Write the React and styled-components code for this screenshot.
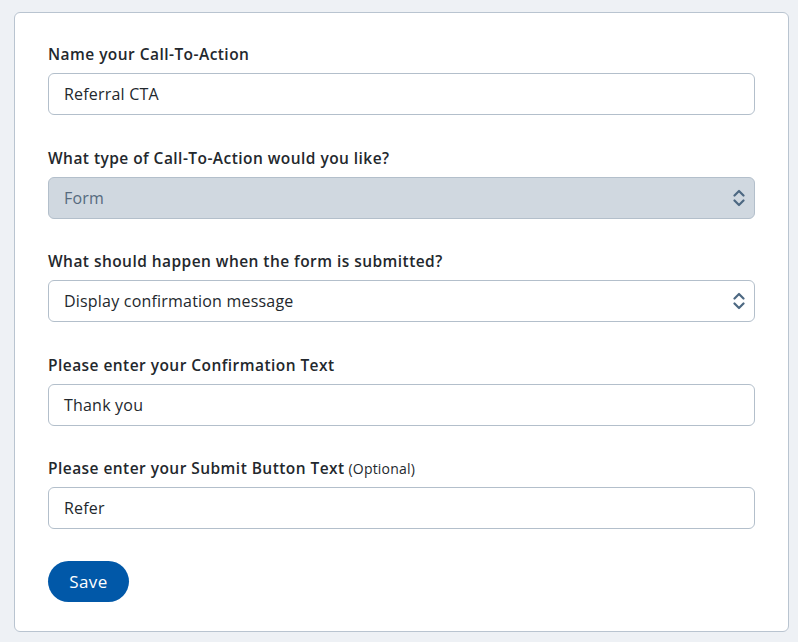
import React from "react";
import styled, { createGlobalStyle } from "styled-components";

const GlobalStyle = createGlobalStyle`
  html, body {
    margin: 0;
    padding: 0;
    background: #eef1f5;
  }
  body {
    font-family: "Open Sans", "Liberation Sans", sans-serif;
    color: #23282d;
  }
`;

const fields = [
  { label: "Name your Call-To-Action", kind: "input", value: "Referral CTA" },
  {
    label: "What type of Call-To-Action would you like?",
    kind: "select",
    value: "Form",
    disabled: true,
  },
  {
    label: "What should happen when the form is submitted?",
    kind: "select",
    value: "Display confirmation message",
  },
  {
    label: "Please enter your Confirmation Text",
    kind: "input",
    value: "Thank you",
  },
  {
    label: "Please enter your Submit Button Text",
    hint: "(Optional)",
    kind: "input",
    value: "Refer",
  },
];

const Chevrons = () => (
  <svg width="12" height="18" viewBox="0 0 12 18" fill="none">
    <path
      d="M1.5 6.5 L6 2 L10.5 6.5"
      stroke="#4d6882"
      strokeWidth="2.2"
      strokeLinecap="round"
      strokeLinejoin="round"
    />
    <path
      d="M1.5 11.5 L6 16 L10.5 11.5"
      stroke="#4d6882"
      strokeWidth="2.2"
      strokeLinecap="round"
      strokeLinejoin="round"
    />
  </svg>
);

const App = () => {
  return (
    <Page>
      <GlobalStyle />
      <Card>
        {fields.map((f) => (
          <Field key={f.label}>
            <Label>
              {f.label}
              {f.hint && <Hint> {f.hint}</Hint>}
            </Label>
            <Box $disabled={f.disabled}>
              <span>{f.value}</span>
              {f.kind === "select" && <Chevrons />}
            </Box>
          </Field>
        ))}
        <SaveButton>Save</SaveButton>
      </Card>
    </Page>
  );
};

export default App;

const Page = styled.div`
  width: 798px;
  height: 642px;
  box-sizing: border-box;
  padding: 12px 9px 0 14px;
`;

const Card = styled.div`
  box-sizing: border-box;
  height: 620px;
  background: #ffffff;
  border: 1px solid #b9c4d0;
  border-radius: 6px;
  padding: 31px 33px 0 33px;
  display: flex;
  flex-direction: column;
  gap: 32.5px;
`;

const Field = styled.div`
  display: flex;
  flex-direction: column;
  gap: 9px;
`;

const Label = styled.div`
  height: 20px;
  font-size: 15.5px;
  font-weight: 600;
  line-height: 20px;
  letter-spacing: 0.45px;
  color: #23282d;
  white-space: nowrap;
`;

const Hint = styled.span`
  font-size: 14px;
  font-weight: 400;
  letter-spacing: 0.2px;
`;

const Box = styled.div`
  box-sizing: border-box;
  height: 42px;
  display: flex;
  align-items: center;
  justify-content: space-between;
  padding: 0 9px 0 15px;
  border: 1px solid #b3bfcb;
  border-radius: 6px;
  background: ${(p) => (p.$disabled ? "#d0d8e0" : "#ffffff")};
  color: ${(p) => (p.$disabled ? "#566a7e" : "#23282d")};
  font-size: 16px;
  letter-spacing: 0.2px;
`;

const SaveButton = styled.button`
  align-self: flex-start;
  margin-top: -1px;
  width: 81px;
  height: 41px;
  border: none;
  border-radius: 21px;
  background: #0158a8;
  color: #ffffff;
  font-family: "Open Sans", "Liberation Sans", sans-serif;
  font-size: 17px;
  font-weight: 400;
  letter-spacing: 0.4px;
  cursor: pointer;
`;
